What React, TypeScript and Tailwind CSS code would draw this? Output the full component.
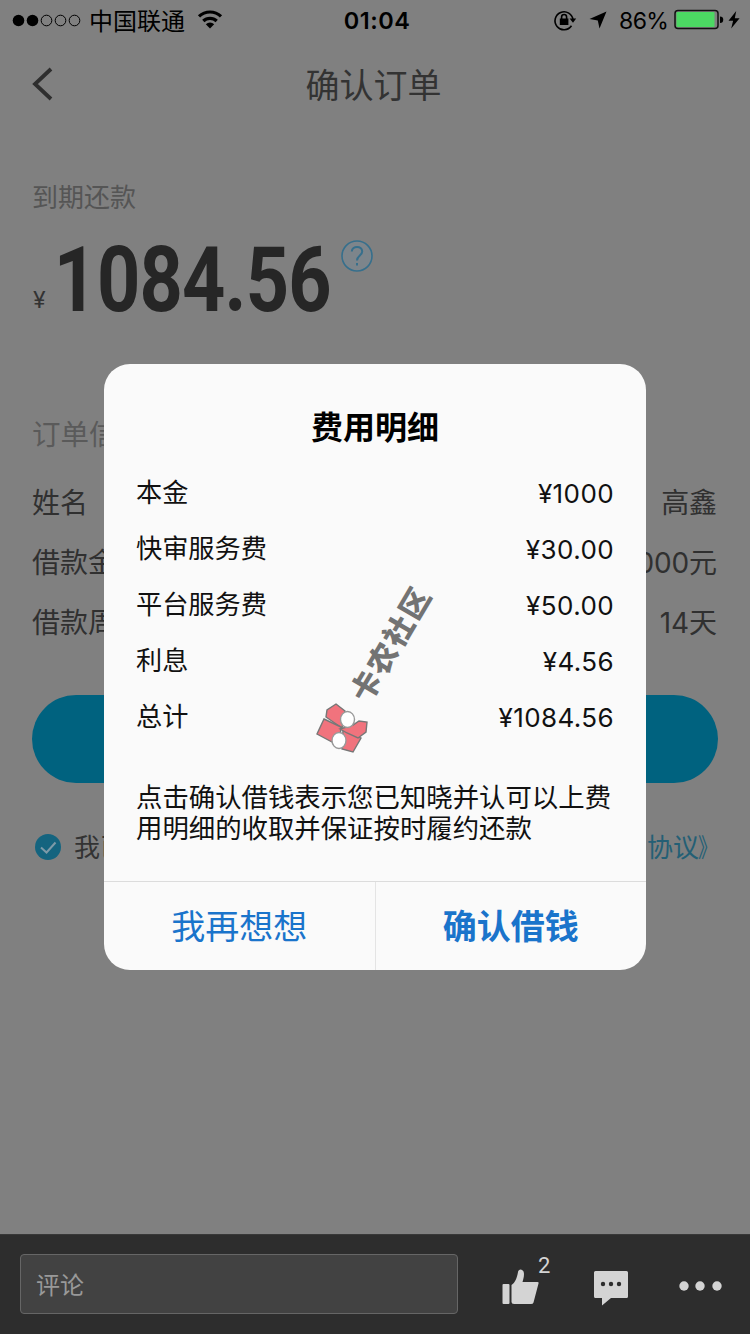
import { ReactNode } from 'react'

const fees = [
  { label: '本金', value: '¥1000' },
  { label: '快审服务费', value: '¥30.00' },
  { label: '平台服务费', value: '¥50.00' },
  { label: '利息', value: '¥4.56' },
  { label: '总计', value: '¥1084.56' },
]

const orderInfo = [
  { label: '姓名', value: '高鑫' },
  { label: '借款金额', value: '1000元' },
  { label: '借款周期', value: '14天' },
]

function StatusBar() {
  return (
    <div className="relative flex h-10 items-center justify-between pl-3 pr-[10px] text-black">
      <div className="flex items-center">
        <svg width="70" height="14" viewBox="0 0 70 14">
          <circle cx="6.5" cy="7.5" r="5.8" />
          <circle cx="20.5" cy="7.5" r="5.8" />
          <g fill="none" stroke="black" strokeWidth="1">
            <circle cx="34.5" cy="7.5" r="5.3" />
            <circle cx="48.5" cy="7.5" r="5.3" />
            <circle cx="62.5" cy="7.5" r="5.3" />
          </g>
        </svg>
        <span className="ml-[7px] pt-[3px] text-[24px] leading-10">中国联通</span>
        <svg className="ml-3" width="26" height="20" viewBox="0 0 26 20" fill="none" stroke="black" strokeWidth="3.2">
          <path d="M2 6.4A16 16 0 0 1 24 6.4" />
          <path d="M6.3 11A9.6 9.6 0 0 1 19.7 11" />
          <path d="M8.8 14.2A6 6 0 0 1 17.2 14.2L13 18.6Z" fill="black" stroke="none" />
        </svg>
      </div>
      <div className="absolute inset-x-0 pl-1 pt-0.5 text-center text-[23.5px] font-semibold tracking-[0.5px]">01:04</div>
      <div className="flex items-center">
        <svg className="-ml-0.5" width="24" height="22" viewBox="0 0 24 22" fill="none" stroke="black">
          <path d="M18.5 16.8A9 9 0 1 1 20 11" strokeWidth="1.6" />
          <path d="M16.6 9.4h6.6L20 13.8Z" fill="black" stroke="none" />
          <rect x="6.8" y="9.5" width="8.6" height="6.5" fill="black" stroke="none" />
          <path d="M8.6 10V8a2.5 2.5 0 0 1 5 0v2" strokeWidth="1.6" />
        </svg>
        <svg className="ml-3" width="18" height="18" viewBox="0 0 18 18">
          <path d="M17.5 0.5L10.5 17.5L8.8 9.4L0.5 8Z" />
        </svg>
        <span className="ml-3 w-[50px] pt-0.5 text-[23px] tracking-[-0.6px]">86%</span>
        <svg className="ml-[5px]" width="50" height="22" viewBox="0 0 50 22">
          <rect x="1" y="1.5" width="43" height="18" rx="3" fill="none" stroke="#111" strokeWidth="1.5" />
          <rect x="2.5" y="3" width="38" height="15" rx="1" fill="#4cd863" />
          <path d="M46 7.5a3.2 3.2 0 0 1 0 6.5Z" />
        </svg>
        <svg className="ml-1" width="12" height="18" viewBox="0 0 12 18">
          <path d="M8.2 0L0.5 9.8h4.6L3.2 17.5L11.6 7.2H6.8Z" />
        </svg>
      </div>
    </div>
  )
}

function InfoRow({ label, value }: { label: string; value: string }) {
  return (
    <div className="flex h-[60px] items-center justify-between pr-px text-[28px] text-[#303030]">
      <span>{label}</span>
      <span className="tracking-[-0.1px]">{value}</span>
    </div>
  )
}

function ModalButton({ children, className }: { children: ReactNode; className: string }) {
  return (
    <button className={`flex flex-1 items-center justify-center pt-0.5 text-[34px] leading-none text-[#1a74cb] ${className}`}>
      {children}
    </button>
  )
}

function FeeModal() {
  return (
    <div className="absolute left-[104px] top-[364px] flex h-[606px] w-[542px] flex-col overflow-hidden rounded-[26px] bg-[#fafafa] text-[#111]">
      <h2 className="mt-10 text-center text-[32px] font-bold leading-[48px] text-black">费用明细</h2>
      <div className="mt-3 px-8">
        {fees.map((fee) => (
          <div key={fee.label} className="flex h-14 items-center justify-between text-[26.2px]">
            <span className="pt-0.5">{fee.label}</span>
            <span className="pt-0.5 text-[26px] tracking-[0.4px]">{fee.value}</span>
          </div>
        ))}
      </div>
      <p className="mt-[38px] whitespace-nowrap px-8 text-[26.4px] leading-[31px]">
        点击确认借钱表示您已知晓并认可以上费
        <br />
        用明细的收取并保证按时履约还款
      </p>
      <div className="mt-auto flex h-[89px] border-t border-[#dcdcdc]">
        <ModalButton className="border-r border-[#e4e4e4]">我再想想</ModalButton>
        <ModalButton className="font-bold">确认借钱</ModalButton>
      </div>
      <Watermark />
    </div>
  )
}

function Watermark() {
  return (
    <div className="absolute left-[204px] top-[212px] h-[180px] w-[130px]">
      <svg className="absolute left-[7px] top-[126px]" width="54" height="54" viewBox="0 0 54 54" stroke="#777" strokeWidth="1.4">
        <path d="M21 2L30 9L27 26L11 15L12 8Z" fill="#f1737d" />
        <path d="M9 17L26 25L25 35L17 40L2 32Z" fill="#f1737d" />
        <path d="M28 28L46 36L38 50L27 47Z" fill="#f1737d" />
        <path d="M25 27L38 23L44 19L52 20L51 30L43 36L32 31Z" fill="#f1737d" />
        <ellipse cx="32.500" cy="17.500" rx="7" ry="8" fill="white" stroke="#999" />
        <ellipse cx="24" cy="38.500" rx="7" ry="8" fill="white" stroke="#999" />
      </svg>
      <span className="absolute left-[15px] top-[50px] w-[136px] -rotate-[59.5deg] whitespace-nowrap text-center text-[30px] font-black leading-[36px] tracking-[2px] text-[#737373]">
        卡农社区
      </span>
    </div>
  )
}

function CommentBar() {
  return (
    <footer className="flex h-[100px] items-center border-t border-[#383838] bg-[#2d2d2d] pb-px pl-5 pr-[27px]">
      <div className="flex h-[60px] w-[438px] items-center rounded-[4px] border border-[#666] bg-[#424242] px-[15px] pt-[3px] text-[24px] text-[#999]">
        评论
      </div>
      <div className="relative ml-[43px] mt-[5px] flex">
        <svg width="38" height="36" viewBox="0 0 38 36" fill="#d4d4d4">
          <path d="M2.500 15h5a1 1 0 0 1 1 1v18a1 1 0 0 1-1 1h-5a1 1 0 0 1-1-1V16a1 1 0 0 1 1-1Z" />
          <path d="M10.500 16C14 14 16 9 17 3C17.500-1 23-0.500 23 5C23 8.500 22 11 21.500 13H36.500Q38 13 37.500 14.500L32.500 33.500Q32 35 30 35H13Q10.500 35 10.500 33Z" />
        </svg>
        <span className="absolute -top-[17px] left-[37px] font-['Roboto'] text-[22px] leading-7 text-[#d4d4d4]">2</span>
      </div>
      <svg className="ml-[55px] mt-[9px]" width="34" height="35" viewBox="0 0 34 35">
        <path d="M1.500 0h31a1.500 1.500 0 0 1 1.500 1.500v24a1.500 1.500 0 0 1-1.500 1.500H17L8 34.500V27H1.500A1.500 1.500 0 0 1 0 25.500v-24A1.500 1.500 0 0 1 1.500 0Z" fill="#d4d4d4" />
        <g fill="#2d2d2d">
          <circle cx="9" cy="13" r="2.200" />
          <circle cx="17" cy="13" r="2.200" />
          <circle cx="25" cy="13" r="2.200" />
        </g>
      </svg>
      <svg className="ml-auto mt-[3px]" width="44" height="10" viewBox="0 0 44 10" fill="#d4d4d4">
        <circle cx="5" cy="5" r="4.700" />
        <circle cx="21" cy="5" r="4.700" />
        <circle cx="38" cy="5" r="4.700" />
      </svg>
    </footer>
  )
}

export default function App() {
  return (
    <div className="relative flex h-[1334px] w-[750px] flex-col overflow-hidden bg-[#808080] font-['Inter','Noto_Sans_CJK_SC',sans-serif]">
      <StatusBar />
      <header className="relative flex h-[88px] items-center justify-center">
        <svg className="absolute left-[32px] top-[27px]" width="21" height="34" viewBox="0 0 21 34" fill="none" stroke="#2e2e2e" strokeWidth="3.8">
          <path d="M19 2L3 17L19 32" />
        </svg>
        <h1 className="pr-[3px] pt-[3px] text-[34px] leading-none text-[#333]">确认订单</h1>
      </header>

      <main className="flex flex-1 flex-col px-8">
        <div className="mt-[50px] text-[26px] leading-10 text-[#555]">到期还款</div>
        <div className="mt-3 flex h-24">
          <span className="mt-[50px] w-[25px] pl-px text-[23px] leading-10 text-[#333]">¥</span>
          <span className="flex w-[284px] origin-left scale-x-[0.84] whitespace-nowrap pt-[2px] font-['Roboto'] text-[90px] font-bold leading-[98px] tracking-[-1px] text-[#262626]">
            <span className="-ml-[4px] mr-[1px]">1</span>
            <span>084.56</span>
          </span>
          <svg className="mt-[10px]" width="32" height="32" viewBox="0 0 32 32" fill="none" stroke="#366f8c" strokeWidth="1.6">
            <circle cx="16" cy="16" r="15" fill="#7d858b" />
            <path d="M10.800 11.500C11 5.500 21.200 5.500 21.200 11.500C21.200 15.500 16 15.500 16 20.500M16 23v2.500" strokeWidth="2" />
          </svg>
        </div>

        <div className="mt-[89px] text-[28.5px] leading-10 text-[#5a5a5a]">订单信息</div>
        <div className="mt-[18px]">
          {orderInfo.map((row) => (
            <InfoRow key={row.label} {...row} />
          ))}
        </div>

        <div className="mt-[42px] h-[88px] shrink-0 rounded-full bg-[#00627f]" />

        <div className="mt-11 flex h-10 items-center pl-[3px] text-[26px]">
          <svg width="26" height="26" viewBox="0 0 26 26">
            <circle cx="13" cy="13" r="13" fill="#14647f" />
            <path d="M6 13.500L11.500 18.500L20.500 8.500" fill="none" stroke="#7d9aa8" strokeWidth="2" />
          </svg>
          <span className="ml-[13px] text-[#333]">我已</span>
          <span className="ml-auto flex text-[#245f75]">
            <span>协议</span>
            <span className="-ml-px -mr-[4px] w-[24px] origin-left scale-x-75">》</span>
          </span>
        </div>
      </main>

      <CommentBar />
      <FeeModal />
    </div>
  )
}
